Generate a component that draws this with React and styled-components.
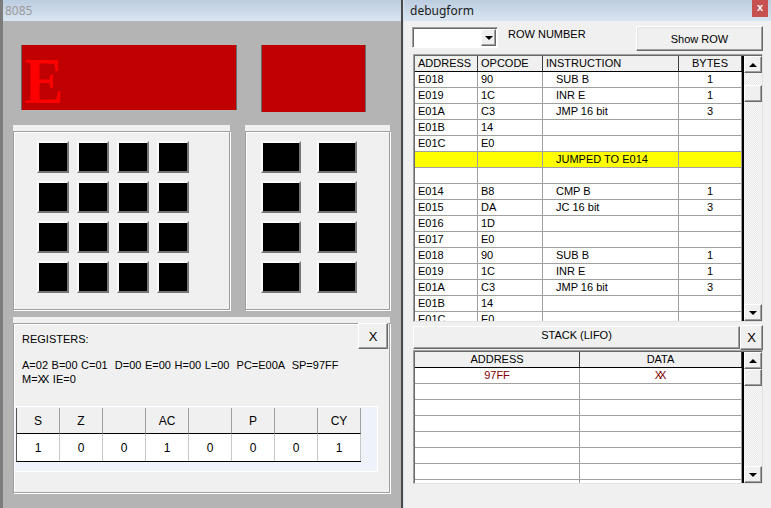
import React from 'react'
import styled, { createGlobalStyle } from 'styled-components'

const program = [
  ['E018', '90', 'SUB B', '1'],
  ['E019', '1C', 'INR E', '1'],
  ['E01A', 'C3', 'JMP 16 bit', '3'],
  ['E01B', '14', '', ''],
  ['E01C', 'E0', '', ''],
  ['', '', 'JUMPED TO E014', '', true],
  ['', '', '', ''],
  ['E014', 'B8', 'CMP B', '1'],
  ['E015', 'DA', 'JC 16 bit', '3'],
  ['E016', '1D', '', ''],
  ['E017', 'E0', '', ''],
  ['E018', '90', 'SUB B', '1'],
  ['E019', '1C', 'INR E', '1'],
  ['E01A', 'C3', 'JMP 16 bit', '3'],
  ['E01B', '14', '', ''],
  ['E01C', 'E0', '', ''],
]

const flagNames = ['S', 'Z', '', 'AC', '', 'P', '', 'CY']
const flagValues = [1, 0, 0, 1, 0, 0, 0, 1]

const stackRows = [['97FF', 'XX'], ['', ''], ['', ''], ['', ''], ['', ''], ['', ''], ['', ''], ['', '']]

const ScrollBar = ({ gap }) => (
  <Scroll>
    <ScrollBtn>
      <Arrow $up />
    </ScrollBtn>
    <Thumb style={{ marginTop: gap }} />
    <ScrollBtn $bottom>
      <Arrow />
    </ScrollBtn>
  </Scroll>
)

const App = () => {
  return (
    <>
      <GlobalStyle />
      <Screen>
        <LeftWindow>
          <TitleBar>
            <TitleText $inactive>8085</TitleText>
          </TitleBar>
          <LeftBody>
            <DisplayRow>
              <Display $w={216} $h={65}>
                <BigE>E</BigE>
              </Display>
              <Display $w={105} $h={67} />
            </DisplayRow>

            <KeypadRow>
              <KeyPanel $w={217}>
                <Etched>
                  <KeyGrid $cols={4} $colGap={8} $padLeft={23}>
                    {Array.from({ length: 16 }).map((_, i) => (
                      <Key key={i} $w={32} />
                    ))}
                  </KeyGrid>
                </Etched>
              </KeyPanel>
              <KeyPanel $w={145}>
                <Etched>
                  <KeyGrid $cols={2} $colGap={16} $padLeft={15}>
                    {Array.from({ length: 8 }).map((_, i) => (
                      <Key key={i} $w={40} />
                    ))}
                  </KeyGrid>
                </Etched>
              </KeyPanel>
            </KeypadRow>

            <RegPanel>
              <Etched $column>
                <RegHeader>
                  <RegTitle>REGISTERS:</RegTitle>
                  <SmallButton $w={30} $h={26}>X</SmallButton>
                </RegHeader>
                <RegText>
                  <div>A=02 B=00 C=01 &nbsp;D=00 E=00 H=00 L=00 &nbsp;PC=E00A &nbsp;SP=97FF</div>
                  <div>
                    M=<Crossed>XX</Crossed> IE=0
                  </div>
                </RegText>
                <FlagsBox>
                  <FlagsGrid>
                    {flagNames.map((n, i) => (
                      <FlagHead key={'h' + i}>{n}</FlagHead>
                    ))}
                    {flagValues.map((v, i) => (
                      <FlagCell key={'v' + i}>{v}</FlagCell>
                    ))}
                  </FlagsGrid>
                </FlagsBox>
              </Etched>
            </RegPanel>
          </LeftBody>
        </LeftWindow>

        <Divider />

        <RightWindow>
          <TitleBar $right>
            <TitleText>debugform</TitleText>
            <CloseBox>x</CloseBox>
          </TitleBar>
          <DebugBody>
            <Toolbar>
              <Combo>
                <ComboButton>
                  <Arrow />
                </ComboButton>
              </Combo>
              <RowLabel>ROW NUMBER</RowLabel>
              <ShowRow>Show ROW</ShowRow>
            </Toolbar>

            <GridFrame $h={268}>
              <Table>
                <HeadRow $cols="63px 65px 136px 63px">
                  <HeadCell>ADDRESS</HeadCell>
                  <HeadCell>OPCODE</HeadCell>
                  <HeadCell>INSTRUCTION</HeadCell>
                  <HeadCell $center>BYTES</HeadCell>
                </HeadRow>
                {program.map((r, i) => (
                  <Row key={i} $cols="63px 65px 136px 63px" $hl={r[4]}>
                    <Cell>{r[0]}</Cell>
                    <Cell>{r[1]}</Cell>
                    <Cell $indent>{r[2]}</Cell>
                    <Cell $center>{r[3]}</Cell>
                  </Row>
                ))}
              </Table>
              <ScrollBar gap={12} />
            </GridFrame>

            <StackBar>
              <StackTitle>STACK (LIFO)</StackTitle>
              <SmallButton $w={23} $h={25}>X</SmallButton>
            </StackBar>

            <GridFrame $h={134} $flush>
              <Table>
                <HeadRow $cols="165px 162px">
                  <HeadCell $center>ADDRESS</HeadCell>
                  <HeadCell $center>DATA</HeadCell>
                </HeadRow>
                {stackRows.map((r, i) => (
                  <Row key={i} $cols="165px 162px">
                    <Cell $center $red>{r[0]}</Cell>
                    <Cell $center $red>
                      <Crossed>{r[1]}</Crossed>
                    </Cell>
                  </Row>
                ))}
              </Table>
              <ScrollBar gap={0} />
            </GridFrame>
          </DebugBody>
        </RightWindow>
      </Screen>
    </>
  )
}

export default App

const GlobalStyle = createGlobalStyle`
  * { box-sizing: border-box; }
  html, body { margin: 0; padding: 0; }
  body {
    width: 771px;
    height: 508px;
    overflow: hidden;
    background: #f0f0f0;
    font-family: "Liberation Sans", Arial, sans-serif;
    font-size: 11px;
    color: #000;
  }
`

const Screen = styled.div`
  display: flex;
  width: 771px;
  height: 508px;
`

const LeftWindow = styled.div`
  width: 401px;
  display: flex;
  flex-direction: column;
  border-left: 3px solid #7c7c7c;
`

const Divider = styled.div`
  width: 2px;
  background: #4a4a4a;
`

const RightWindow = styled.div`
  flex: 1;
  display: flex;
  flex-direction: column;
  background: #f0f0f0;
  border-left: 1px solid #d6e2ee;
`

const TitleBar = styled.div`
  height: 21px;
  flex-shrink: 0;
  display: flex;
  align-items: center;
  justify-content: space-between;
  padding-left: ${p => (p.$right ? 6 : 2)}px;
  background: linear-gradient(#bccde0, #d9e5f2);
`

const TitleText = styled.span`
  font-family: "Noto Sans", "Open Sans", sans-serif;
  font-size: 12px;
  color: ${p => (p.$inactive ? '#9a9a9a' : '#1a1a1a')};
`

const CloseBox = styled.div`
  align-self: flex-start;
  width: 16px;
  height: 17px;
  margin-right: 3px;
  background: #c75050;
  color: #fff;
  font-weight: bold;
  font-size: 11px;
  line-height: 15px;
  text-align: center;
`

const LeftBody = styled.div`
  flex: 1;
  display: flex;
  flex-direction: column;
  background: #b4b4b4;
  padding-left: 10px;
`

const DisplayRow = styled.div`
  display: flex;
  align-items: flex-start;
  gap: 24px;
  margin-top: 24px;
  padding-left: 8px;
`

const Display = styled.div`
  width: ${p => p.$w}px;
  height: ${p => p.$h}px;
  background: #c00000;
  border-left: 1px solid #6a6a6a;
  border-right: 1px solid #6a6a6a;
`

const BigE = styled.div`
  font-family: "Liberation Serif", "Times New Roman", serif;
  font-weight: bold;
  font-size: 66px;
  line-height: 56px;
  color: #ff0000;
  padding-top: 8px;
  padding-left: 3px;
  transform: scaleX(0.88);
  transform-origin: left top;
`

const KeypadRow = styled.div`
  display: flex;
  gap: 15px;
  margin-top: 13px;
`

const KeyPanel = styled.div`
  width: ${p => p.$w}px;
  height: 185px;
  display: flex;
  padding-top: 6px;
  background: #f0f0f0;
`

const Etched = styled.div`
  flex: 1;
  display: flex;
  flex-direction: ${p => (p.$column ? 'column' : 'row')};
  border: 1px solid #a0a0a0;
  box-shadow: 1px 1px 0 #fff, inset 1px 1px 0 #fff;
`

const KeyGrid = styled.div`
  display: grid;
  grid-template-columns: repeat(${p => p.$cols}, auto);
  column-gap: ${p => p.$colGap}px;
  row-gap: 8px;
  align-content: start;
  padding: 9px 0 0 ${p => p.$padLeft}px;
`

const Key = styled.div`
  width: ${p => p.$w}px;
  height: 32px;
  background: #000;
  border: 2px solid;
  border-color: #fafafa #757575 #757575 #fafafa;
`

const RegPanel = styled.div`
  width: 377px;
  height: 176px;
  margin-top: 7px;
  display: flex;
  padding-top: 6px;
  background: #f0f0f0;
`

const RegHeader = styled.div`
  display: flex;
  justify-content: space-between;
  align-items: flex-start;
  margin-top: -1px;
  padding-right: 1px;
`

const RegTitle = styled.div`
  padding: 10px 0 0 8px;
  line-height: 13px;
`

const SmallButton = styled.div`
  width: ${p => p.$w}px;
  height: ${p => p.$h}px;
  display: flex;
  align-items: center;
  justify-content: center;
  flex-shrink: 0;
  background: #f0f0f0;
  border: 1px solid;
  border-color: #fff #696969 #696969 #fff;
  box-shadow: inset -1px -1px 0 #a0a0a0;
  font-size: 13px;
`

const RegText = styled.div`
  margin-top: 9px;
  padding-left: 8px;
  line-height: 14px;
  word-spacing: 0.5px;
`

const Crossed = styled.span`
  letter-spacing: -3px;
  margin-right: 3px;
`

const FlagsBox = styled.div`
  width: 364px;
  height: 66px;
  margin-top: 20px;
  padding: 1px;
  background: #eef3fa;
  border: 1px solid #fff;
`

const FlagsGrid = styled.div`
  display: grid;
  grid-template-columns: repeat(8, 43px);
  grid-template-rows: 26px 27px;
  width: 345px;
  border-left: 1px solid #555;
  border-right: 1px solid #000;
  border-bottom: 1px solid #000;
  font-size: 12px;
`

const FlagHead = styled.div`
  display: flex;
  align-items: center;
  justify-content: center;
  background: #f0f0f0;
  border-right: 1px solid #a0a0a0;
  border-bottom: 1px solid #000;
`

const FlagCell = styled.div`
  display: flex;
  align-items: center;
  justify-content: center;
  background: #fff;
  border-right: 1px solid #c8c8c8;
`

const DebugBody = styled.div`
  flex: 1;
  display: flex;
  flex-direction: column;
  padding: 0 8px 0 8px;
`

const Toolbar = styled.div`
  display: flex;
  align-items: flex-start;
  height: 25px;
  margin-top: 5px;
`

const Combo = styled.div`
  width: 86px;
  height: 21px;
  margin-top: 1px;
  display: flex;
  justify-content: flex-end;
  align-items: center;
  padding-right: 1px;
  background: #fff;
  border: 1px solid;
  border-color: #a0a0a0 #fff #fff #a0a0a0;
  box-shadow: inset 1px 1px 0 #696969;
`

const ComboButton = styled.div`
  width: 15px;
  height: 17px;
  display: flex;
  align-items: center;
  justify-content: center;
  background: #f0f0f0;
  border: 1px solid;
  border-color: #fff #696969 #696969 #fff;
  box-shadow: inset -1px -1px 0 #a0a0a0;
`

const Arrow = styled.div`
  width: 0;
  height: 0;
  border-left: 4px solid transparent;
  border-right: 4px solid transparent;
  ${p => (p.$up ? 'border-bottom: 4px solid #000;' : 'border-top: 4px solid #000;')}
`

const RowLabel = styled.div`
  margin: 2px 0 0 10px;
  line-height: 13px;
`

const ShowRow = styled.div`
  width: 127px;
  height: 25px;
  margin-left: auto;
  display: flex;
  align-items: center;
  justify-content: center;
  background: #f0f0f0;
  border: 1px solid;
  border-color: #fff #696969 #696969 #fff;
  box-shadow: inset -1px -1px 0 #a0a0a0, inset 1px 1px 0 #e3e3e3;
`

const GridFrame = styled.div`
  display: flex;
  width: 350px;
  height: ${p => p.$h}px;
  margin: ${p => (p.$flush ? 0 : 3)}px 0 0 1px;
  padding: 1px 0 0 1px;
  border: 1px solid;
  border-color: #a0a0a0 #e3e3e3 #e3e3e3 #a0a0a0;
  box-shadow: inset 1px 1px 0 #696969;
  overflow: hidden;
  flex-shrink: 0;
`

const Table = styled.div`
  display: flex;
  flex-direction: column;
  border-right: 2px solid #000;
  background: #fff;
  overflow: hidden;
`

const HeadRow = styled.div`
  display: grid;
  grid-template-columns: ${p => p.$cols};
  height: 16px;
  flex-shrink: 0;
  background: #f0f0f0;
  border-bottom: 1px solid #000;
`

const HeadCell = styled.div`
  padding-left: ${p => (p.$center ? 0 : 3)}px;
  text-align: ${p => (p.$center ? 'center' : 'left')};
  line-height: 15px;
  border-right: 1px solid #404040;
  white-space: nowrap;
`

const Row = styled.div`
  display: grid;
  grid-template-columns: ${p => p.$cols};
  height: 16px;
  flex-shrink: 0;
  background: ${p => (p.$hl ? '#ffff00' : '#fff')};
  border-bottom: 1px solid #a0a0a0;
`

const Cell = styled.div`
  padding-left: ${p => (p.$center ? 0 : p.$indent ? 13 : 3)}px;
  text-align: ${p => (p.$center ? 'center' : 'left')};
  line-height: 15px;
  color: ${p => (p.$red ? '#800000' : '#000')};
  border-right: 1px solid #a0a0a0;
  white-space: nowrap;
`

const Scroll = styled.div`
  width: 18px;
  flex-shrink: 0;
  display: flex;
  flex-direction: column;
  background-color: #f4f4f4;
  background-image: repeating-conic-gradient(#e6e6e6 0 25%, #fbfbfb 0 50%);
  background-size: 2px 2px;
`

const ScrollBtn = styled.div`
  height: 17px;
  flex-shrink: 0;
  display: flex;
  align-items: center;
  justify-content: center;
  margin-top: ${p => (p.$bottom ? 'auto' : 0)};
  background: #f0f0f0;
  border: 1px solid;
  border-color: #fff #696969 #696969 #fff;
  box-shadow: inset -1px -1px 0 #a0a0a0;
`

const Thumb = styled.div`
  height: 17px;
  flex-shrink: 0;
  background: #f0f0f0;
  border: 1px solid;
  border-color: #fff #696969 #696969 #fff;
  box-shadow: inset -1px -1px 0 #a0a0a0;
`

const StackBar = styled.div`
  display: flex;
  align-items: flex-start;
  width: 350px;
  height: 25px;
  margin: 3px 0 0 1px;
  flex-shrink: 0;
`

const StackTitle = styled.div`
  flex: 1;
  height: 23px;
  margin-top: 1px;
  padding-top: 2px;
  text-align: center;
  background: #f0f0f0;
  border: 1px solid;
  border-color: #fff #696969 #696969 #fff;
  box-shadow: inset -1px -1px 0 #a0a0a0;
`
